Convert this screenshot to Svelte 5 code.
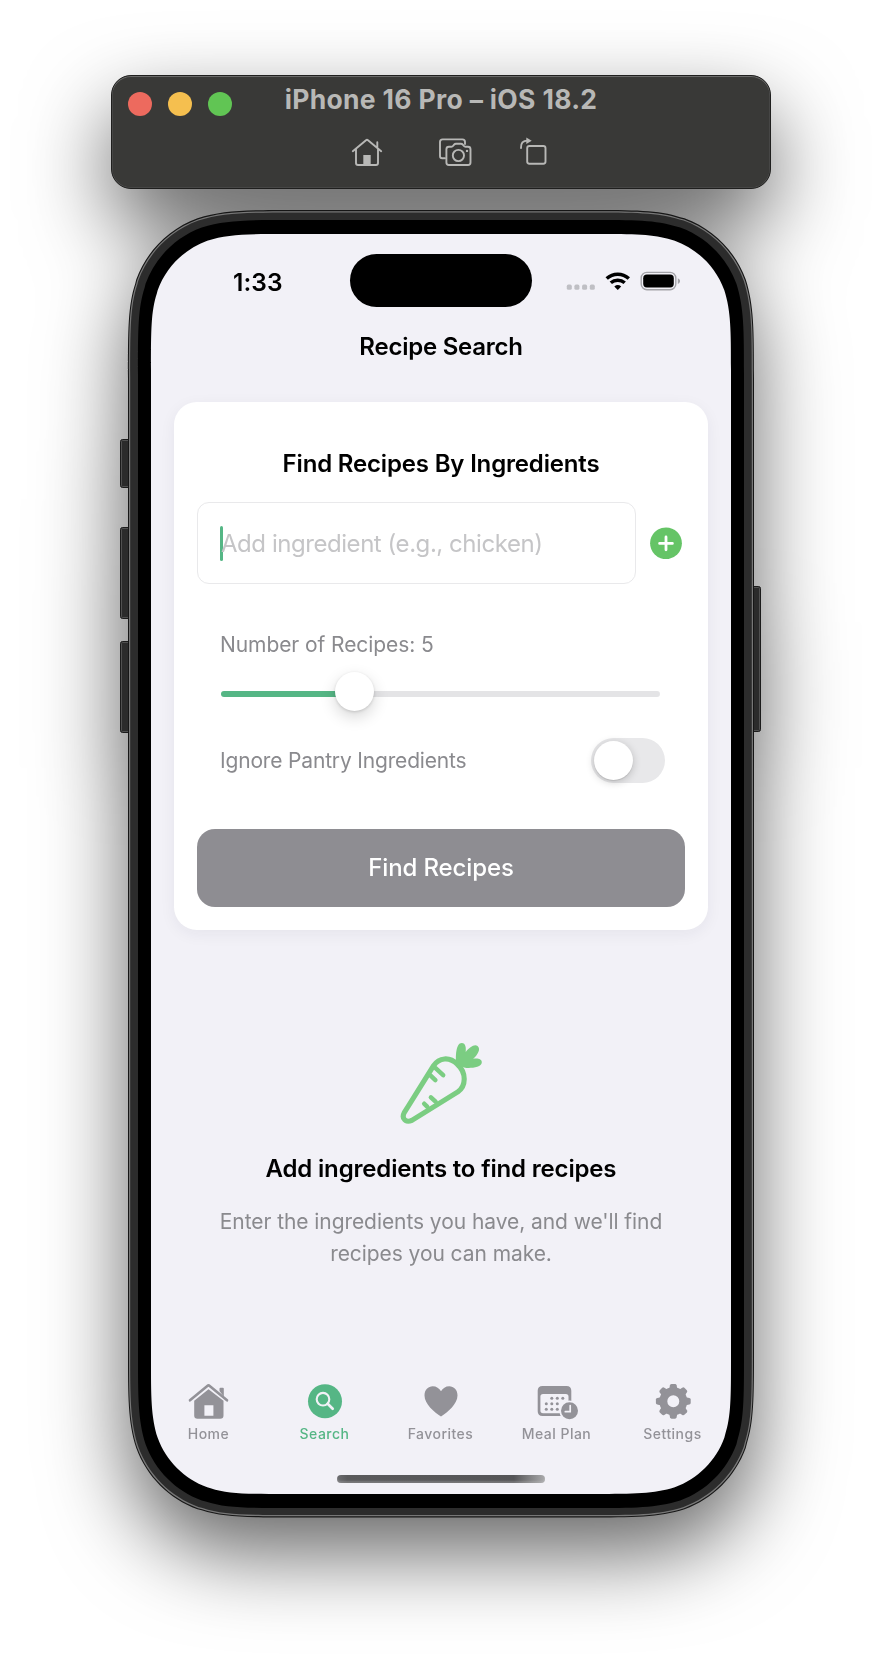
<script>
  // Rounded rectangle with continuous-curvature corners.
  function squircle(x, y, w, h, r) {
    const a = 1.52866 * r, b = 1.08849 * r, c = 0.86841 * r, d = 0.66993 * r, e = 0.0655 * r;
    const f = 0.63149 * r, g = 0.07491 * r, i = 0.37282 * r, j = 0.16906 * r;
    const R = x + w, B = y + h;
    return [
      `M${x + a} ${y}L${R - a} ${y}`,
      `C${R - b} ${y} ${R - c} ${y} ${R - d} ${y + e}L${R - f} ${y + g}`,
      `C${R - i} ${y + j} ${R - j} ${y + i} ${R - g} ${y + f}`,
      `C${R} ${y + c} ${R} ${y + b} ${R} ${y + a}L${R} ${B - a}`,
      `C${R} ${B - b} ${R} ${B - c} ${R - e} ${B - d}L${R - g} ${B - f}`,
      `C${R - j} ${B - i} ${R - i} ${B - j} ${R - f} ${B - g}`,
      `C${R - c} ${B} ${R - b} ${B} ${R - a} ${B}L${x + a} ${B}`,
      `C${x + b} ${B} ${x + c} ${B} ${x + d} ${B - e}L${x + f} ${B - g}`,
      `C${x + i} ${B - j} ${x + j} ${B - i} ${x + g} ${B - f}`,
      `C${x} ${B - c} ${x} ${B - b} ${x} ${B - a}L${x} ${y + a}`,
      `C${x} ${y + b} ${x} ${y + c} ${x + e} ${y + d}L${x + g} ${y + f}`,
      `C${x + j} ${y + i} ${x + i} ${y + j} ${x + f} ${y + g}`,
      `C${x + c} ${y} ${x + b} ${y} ${x + a} ${y}Z`
    ].join('');
  }

  const sideButtons = [
    { x: -8, y: 229, w: 12, h: 49 },
    { x: -8, y: 317, w: 12, h: 92 },
    { x: -8, y: 431, w: 12, h: 92 },
    { x: 622, y: 376, w: 11, h: 146 }
  ];

  const tabs = ['Home', 'Search', 'Favorites', 'Meal Plan', 'Settings'];
  const active = 'Search';
  const dots = [[13, 0], [18.5, 0], [24, 0], [7.5, 5.5], [13, 5.5], [18.5, 5.5], [7.5, 11], [13, 11], [18.5, 11]];
  const teeth = [0, 45, 90, 135, 180, 225, 270, 315];
  const count = 5;
</script>

<div class="desktop">
  <header class="toolbar">
    <div class="lights"><i class="red"></i><i class="amber"></i><i class="green"></i></div>
    <div class="window-title">iPhone 16 Pro – iOS 18.2</div>
    <div class="actions">
      <svg width="32" height="30" viewBox="0 0 32 30">
        <path d="M1.8 14.2 15 3.2q1-.8 2 0L30.2 14.2M5 12v14q0 2 2 2h18q2 0 2-2V12M26.3 10.5V5.2" />
        <path d="M12.3 18h7.4v10h-7.4z" class="solid" />
      </svg>
      <svg width="35" height="30" viewBox="0 0 35 30">
        <path d="M7 21.3H4.3Q2 21.3 2 19V5q0-2.6 2.6-2.6h19.8Q27 2.400 27 5v2" />
        <path d="M10.900 9.800h2.400q1.200 0 1.900-1l.9-1.200q.7-.9 1.900-.9h4.900q1.200 0 1.900.9l.9 1.200q.7 1 1.900 1h2.400q2.500 0 2.500 2.500v13.200q0 2.500-2.500 2.500H10.900q-2.500 0-2.500-2.500V12.300q0-2.500 2.500-2.500z" />
        <circle cx="20.400" cy="18.500" r="5.600" /><circle cx="29" cy="13.900" r="1.200" class="solid" />
      </svg>
      <svg width="28" height="32" viewBox="0 0 28 32">
        <rect x="8.200" y="11" width="18.300" height="17.700" rx="2.200" />
        <path d="M2 13q-.4-7.400 6.500-7.400" /><path d="M7.300 2.500v6.600l5.400-3.300z" class="solid" />
      </svg>
    </div>
  </header>

  <main class="phone">
    <svg class="frame" width="626" height="1307" viewBox="0 0 626 1307" overflow="visible">
      {#each sideButtons as b}
        <rect x={b.x + 0.5} y={b.y + 0.5} width={b.w - 1} height={b.h - 1} rx="2" fill="#2b2b2b" stroke="#1b1b1b" />
        <rect x={b.x + 1.5} y={b.y + 1.5} width={b.w - 3} height={b.h - 3} rx="1" fill="none" stroke="#505050" />
      {/each}
      <path d={squircle(0, 0, 626, 1307.5, 110)} fill="#161616" />
      <path d={squircle(1, 1.3, 624, 1305, 109)} fill="#777" />
      <path d={squircle(2.200, 2.500, 621.600, 1302.500, 108)} fill="#2c2c2c" />
      <path d={squircle(10, 10, 606, 1288, 101)} fill="#000" />
      <path d={squircle(23, 24, 580, 1260, 89)} fill="#f2f1f7" />
    </svg>

    <section class="screen">
      <div class="status">
        <time>1:33</time>
        <div class="island"></div>
        <div class="signals">
          <svg width="114" height="20" viewBox="0 0 114 20">
            {#each [0, 7.6, 15.3, 23] as x}
              <rect x={x + 0.800} y="13.600" width="5" height="5.200" rx="1.600" fill="#bfbfc4" />
            {/each}
            <g fill="none" stroke="#000" stroke-width="3.500">
              <path d="M40.700 7.500a16.500 16.500 0 0 1 22.100 0" />
              <path d="M44.800 11.800a10.500 10.500 0 0 1 13.900 0" />
            </g>
            <path d="M48.300 15.500q3.500-2.900 6.900 0L51.750 19z" />
            <rect x="75.200" y="1.400" width="34.600" height="17.300" rx="5.700" fill="none" stroke="#a3a3a8" stroke-width="1.400" />
            <rect x="77.200" y="3.600" width="30.600" height="12.800" rx="3.600" />
            <path d="M111.800 7.200q2.300 1 2.300 2.900t-2.300 2.900z" fill="#a3a3a8" />
          </svg>
        </div>
      </div>

      <h1>Recipe Search</h1>

      <div class="card">
        <h2>Find Recipes By Ingredients</h2>
        <div class="entry">
          <div class="field"><span class="caret"></span><span class="hint">Add ingredient (e.g., chicken)</span></div>
          <svg width="32" height="32" viewBox="0 0 32 32">
            <circle cx="16" cy="16.300" r="15.900" fill="#65c466" />
            <path d="M16 10v12.800M9.600 16.400h12.800" stroke="#fff" stroke-width="2.800" stroke-linecap="round" />
          </svg>
        </div>
        <div class="options">
          <div class="count">Number of Recipes: {count}</div>
          <div class="slider"><span class="filled"></span><span class="knob"></span><span class="rest"></span></div>
          <div class="pantry"><span>Ignore Pantry Ingredients</span><span class="switch"><span></span></span></div>
        </div>
        <button>Find Recipes</button>
      </div>

      <div class="empty">
        <svg width="84" height="84" viewBox="-1 -1 85 85">
          <g fill="none" stroke="#7bcd82" stroke-width="5.200" stroke-linecap="round" stroke-linejoin="round">
            <path d="M58 21.500C50 13.500 39.500 14.800 34 23L4.300 70.500C1.200 76.500 6 81 12 78.300L58.500 49.500C67 43.500 67.500 30 58 21.500Z" />
            <path d="M36 25.500 43.700 32.500M31 33 35.800 37.500M31.300 55 36 59.300M24.500 61.500 27.500 64.500" stroke-width="4.600" />
          </g>
          <path d="M57 22C56 14 56.500 0 62.500 0c4 0 4.500 5 4 9 4-5 9-8.500 12-6 3.500 3 .5 8.500-4.500 13 5-.8 8.800.2 8.800 3.500 0 5.500-12 6.200-17 5.500z" fill="#7bcd82" />
        </svg>
        <h3>Add ingredients to find recipes</h3>
        <p>Enter the ingredients you have, and we'll find<br /><span>recipes you can make.</span></p>
      </div>

      <nav>
        {#each tabs as tab}
          <div class="tab" class:active={tab === active}>
            {#if tab === 'Home'}
              <svg width="42" height="38" viewBox="0 0 42 38">
                <path d="M2 18.300 19.300 3.900q1.200-1 2.400 0L39 18.300" fill="none" stroke="currentColor" stroke-width="2.600" stroke-linecap="round" />
                <path d="M31.500 9V6.800q0-1 1-1h2.300q1 0 1 1v8z" />
                <path fill-rule="evenodd" d="M6.200 18.700 20.500 7.300 35.500 18.700V33.500q0 3.300-3.300 3.300H9.500q-3.300 0-3.300-3.300zM16.400 23.200v10.600h9V23.200z" />
              </svg>
            {:else if tab === 'Search'}
              <svg width="42" height="38" viewBox="0 0 42 38">
                <circle cx="21" cy="19.200" r="17" />
                <g fill="none" stroke="#f2f1f7" stroke-linecap="round">
                  <circle cx="19" cy="17.200" r="6.300" stroke-width="2.100" /><path d="m23.700 21.800 5 5" stroke-width="2.700" />
                </g>
              </svg>
            {:else if tab === 'Favorites'}
              <svg width="42" height="38" viewBox="0 0 42 38">
                <path d="M21 34.500C14.500 30.500 4.500 22 4.500 13.500 4.500 7.800 8.300 4.300 12.700 4.300c3.700 0 6.600 2 8.300 5 1.700-3 4.600-5 8.300-5 4.400 0 8.200 3.500 8.200 9.200C37.500 22 27.500 30.500 21 34.500z" />
              </svg>
            {:else if tab === 'Meal Plan'}
              <svg width="42" height="38" viewBox="-1.500 0 42 38">
                <path fill-rule="evenodd" d="M5 3.900h24q4.800 0 4.800 4.800v20.500q0 4.800-4.800 4.800H5Q.2 34 .2 29.200V8.700Q.2 3.900 5 3.900zM5.500 12q-2.600 0-2.600 2.600v14q0 2.600 2.600 2.600h22.900q2.600 0 2.600-2.600v-14q0-2.600-2.600-2.600z" />
                {#each dots as [x, y]}<circle cx={x + 1.300} cy={y + 16.300} r="1.500" />{/each}
                <circle cx="32" cy="28.700" r="10.200" fill="#f2f1f7" /><circle cx="32" cy="28.700" r="8.500" />
                <path d="M32.700 23.500v6.200h-4.900" fill="none" stroke="#f2f1f7" stroke-width="1.700" stroke-linecap="round" />
              </svg>
            {:else}
              <svg width="42" height="38" viewBox="0 0 42 38">
                <circle cx="21.300" cy="19.300" r="10" fill="none" stroke="currentColor" stroke-width="8" />
                {#each teeth as angle}
                  <path d="M17 8 18 3.300Q18.300 1.900 19.600 1.900h3.400q1.300 0 1.600 1.400L25.600 8z" transform="rotate({angle} 21.300 19.300)" />
                {/each}
              </svg>
            {/if}
            <span>{tab}</span>
          </div>
        {/each}
      </nav>
      <div class="indicator"></div>
    </section>
  </main>
</div>

<style>
  :global(body) { margin: 0; background: #fff; }
  .desktop {
    box-sizing: border-box; width: 882px; height: 1668px; padding-top: 75px; overflow: hidden;
    display: flex; flex-direction: column; align-items: center;
    font-family: Inter, "Liberation Sans", sans-serif;
    filter: drop-shadow(0 36px 42px rgba(0, 0, 0, .6));
  }
  .toolbar {
    box-sizing: border-box; width: 660px; height: 114px; border-radius: 20px; background: #393937;
    border: 1px solid #1f1f1e; box-shadow: inset 0 1px 0 #6a6a69, inset 0 0 0 .5px #555;
    display: grid; grid-template: 37px 1fr / 156px 1fr 156px; padding: 5px 0 0; color: #b8b8b6;
  }
  .lights { display: flex; gap: 16px; padding: 11px 0 0 16px; }
  .lights i { width: 24px; height: 24px; border-radius: 50%; flex: none; }
  .red { background: #ed6a5e; } .amber { background: #f5bf4f; } .green { background: #61c554; }
  .window-title { text-align: center; font-weight: 700; font-size: 26.5px; line-height: 37px; letter-spacing: .33px; white-space: nowrap; }
  .actions { grid-column: 1 / -1; display: flex; align-items: flex-start; padding: 19px 0 0 239px; }
  .actions svg { fill: none; stroke: #b8b8b6; stroke-width: 1.900; stroke-linecap: round; stroke-linejoin: round; }
  .actions svg + svg { margin-left: 55px; }
  .actions svg:last-child { margin: -2px 0 0 46px; }
  .actions .solid { fill: #b8b8b6; stroke: none; }

  .phone { position: relative; box-sizing: border-box; width: 626px; height: 1307px; margin: 21px 0 0; padding: 24px 23px 23px; }
  .frame { position: absolute; inset: 0; }
  .screen { position: relative; width: 580px; height: 1260px; display: flex; flex-direction: column; color: #000; }
  .status { height: 87px; padding-top: 6px; box-sizing: border-box; display: grid; grid-template-columns: 199px 182px 199px; align-items: center; }
  time { font-weight: 600; font-size: 24.5px; padding: 2px 0 0 82px; letter-spacing: .1px; }
  .island { height: 53px; border-radius: 27px; background: #000; }
  .signals { display: flex; padding-left: 34px; }
  h1, h2, h3, p { margin: 0; text-align: center; white-space: nowrap; }
  h1, h2, h3 { font-weight: 600; font-size: 24px; letter-spacing: -.17px; }
  h1 { line-height: 50px; padding-top: 1px; margin-bottom: 30px; letter-spacing: -.25px; }
  .card { box-sizing: border-box; margin: 0 23px; height: 528px; padding: 44px 23px 23px; background: #fff; border-radius: 23px; box-shadow: 0 4px 16px rgba(30, 30, 60, .06); }
  h2 { line-height: 36px; }
  .entry { display: flex; align-items: center; gap: 14px; margin-top: 20px; }
  .field { box-sizing: border-box; width: 439px; height: 82px; border: 1.500px solid #e9e9eb; border-radius: 12px; padding-left: 22px; display: flex; align-items: center; }
  .caret { width: 3px; height: 35px; border-radius: 2px; background: #55b685; margin-right: -2px; }
  .hint { font-size: 24px; letter-spacing: -.45px; color: #c5c5c7; white-space: nowrap; }
  .options { margin: 44px 20px 0 24px; color: #8a8a8e; font-size: 21px; }
  .count { line-height: 32px; letter-spacing: -.08px; padding-top: 1px; margin-left: -1px; }
  .slider { width: 439px; height: 38px; margin-top: 13px; display: flex; align-items: center; }
  .filled, .rest { height: 6px; border-radius: 3px; background: #55b685; width: 122px; margin-right: -7px; position: relative; top: .5px; }
  .rest { background: #e4e4e6; flex: 1; margin: 0 0 0 -6px; }
  .knob { width: 39px; height: 39px; flex: none; border-radius: 50%; background: #fff; position: relative; z-index: 1; top: -1.5px; left: -.7px; box-shadow: 0 1px 3px rgba(0, 0, 0, .15), 0 6px 16px rgba(0, 0, 0, .16); }
  .pantry { height: 45px; margin-top: 26px; display: flex; align-items: center; justify-content: space-between; letter-spacing: -.17px; margin-left: -1px; }
  .switch { box-sizing: border-box; width: 74px; height: 45px; border-radius: 23px; background: #e8e8ea; padding: 3px; display: flex; }
  .switch span { width: 39px; height: 39px; border-radius: 50%; background: #fff; box-shadow: 0 2px 8px rgba(0, 0, 0, .2), 0 1px 1px rgba(0, 0, 0, .1); }
  button { display: block; width: 100%; height: 78px; margin-top: 46px; padding: 0 0 1px; border: 0; border-radius: 18px; background: #8e8d92; color: #fff; font: 500 24px Inter, sans-serif; letter-spacing: -.13px; }
  .empty { display: flex; flex-direction: column; align-items: center; padding-top: 112px; }
  h3 { line-height: 34px; margin-top: 26px; }
  p { margin-top: 20px; line-height: 32px; font-size: 21px; letter-spacing: -.07px; color: #8a8a8e; }
  nav { margin-top: auto; display: grid; grid-template-columns: repeat(5, 116px); margin-left: -.5px; }
  .tab { display: flex; flex-direction: column; align-items: center; color: #939298; font-size: 14px; font-weight: 500; letter-spacing: .47px; line-height: 16px; }
  .tab svg { fill: currentColor; margin-bottom: 6px; }
  .active { color: #55b685; }
  .indicator { align-self: center; width: 208px; height: 8px; margin: 33px 0 11px; border-radius: 4px; background: linear-gradient(90deg, #6d6d70, #5a5a5c 5%, #555557 85%, #aaaaac); box-shadow: inset 0 -2px 2px rgba(200, 200, 200, .3); }
</style>
